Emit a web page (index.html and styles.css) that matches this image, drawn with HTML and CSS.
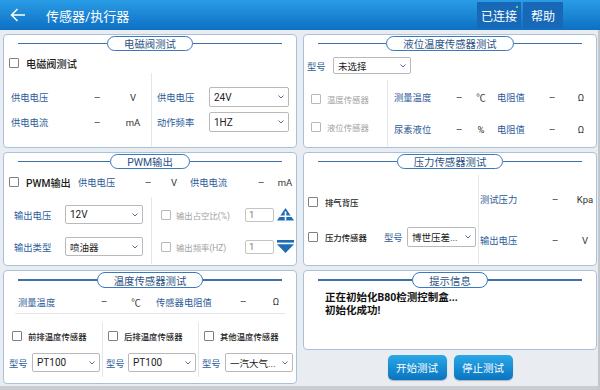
FILE: index.html
```html
<!DOCTYPE html>
<html>
<head>
<meta charset="utf-8">
<link rel="stylesheet" href="styles.css">
</head>
<body>
<div class="app">
  <header class="topbar">
    <svg class="back" viewBox="0 0 16 14" width="16" height="14"><path d="M15 7 H1.5 M7.5 1 L1.5 7 L7.5 13" fill="none" stroke="#fff" stroke-width="1.5"/></svg>
    <div class="title">传感器/执行器</div>
    <div class="actions">
      <div class="hbtn conn">已连接<span class="dot"></span></div>
      <div class="hbtn">帮助</div>
    </div>
  </header>
  <main class="grid">
    <!-- Panel 1 -->
    <section class="panel">
      <div class="ptitle"><i class="line"></i><span class="pill">电磁阀测试</span><i class="line"></i></div>
      <div class="chkrow p1chk"><span class="cb"></span><span class="chklbl">电磁阀测试</span></div>
      <div class="split p1split">
        <div class="col">
          <div class="vrow"><span class="lb">供电电压</span><span class="val">--</span><span class="unit">V</span></div>
          <div class="vrow"><span class="lb">供电电流</span><span class="val">--</span><span class="unit">mA</span></div>
        </div>
        <div class="col sep p1right">
          <div class="frow"><span class="lb w52">供电电压</span><div class="sel s1">24V<svg class="chev" viewBox="0 0 6 4" width="6" height="4"><path d="M0.5 0.5 L3 3 L5.5 0.5" fill="none" stroke="#4d6f9a" stroke-width="1"/></svg></div></div>
          <div class="frow"><span class="lb w52">动作频率</span><div class="sel s1">1HZ<svg class="chev" viewBox="0 0 6 4" width="6" height="4"><path d="M0.5 0.5 L3 3 L5.5 0.5" fill="none" stroke="#4d6f9a" stroke-width="1"/></svg></div></div>
        </div>
      </div>
    </section>

    <!-- Panel 2 -->
    <section class="panel">
      <div class="ptitle"><i class="line"></i><span class="pill">液位温度传感器测试</span><i class="line"></i></div>
      <div class="typerow"><span class="lb w26">型号</span><div class="sel s2 cjk">未选择<svg class="chev" viewBox="0 0 6 4" width="6" height="4"><path d="M0.5 0.5 L3 3 L5.5 0.5" fill="none" stroke="#4d6f9a" stroke-width="1"/></svg></div></div>
      <div class="split p2split">
        <div class="col p2left">
          <div class="crow"><span class="cb dis"></span><span class="dlbl">温度传感器</span></div>
          <div class="crow"><span class="cb dis"></span><span class="dlbl">液位传感器</span></div>
        </div>
        <div class="col sep p2right">
          <div class="mrow"><span class="lb">测量温度</span><span class="val">--</span><span class="unit">℃</span><span class="lb l2">电阻值</span><span class="val">--</span><span class="unit">Ω</span></div>
          <div class="mrow"><span class="lb">尿素液位</span><span class="val">--</span><span class="unit">%</span><span class="lb l2">电阻值</span><span class="val">--</span><span class="unit">Ω</span></div>
        </div>
      </div>
    </section>

    <!-- Panel 3 -->
    <section class="panel">
      <div class="ptitle"><i class="line"></i><span class="pill">PWM输出</span><i class="line"></i></div>
      <div class="chkrow p3chk"><span class="cb"></span><span class="chklbl w52">PWM输出</span><span class="lb w58">供电电压</span><span class="val w24">--</span><span class="unit w28">V</span><span class="lb w58 ml2">供电电流</span><span class="val w26">--</span><span class="unit w22">mA</span></div>
      <div class="split p3split">
        <div class="col p3left">
          <div class="frow3"><span class="lb w51">输出电压</span><div class="sel s3">12V<svg class="chev" viewBox="0 0 6 4" width="6" height="4"><path d="M0.5 0.5 L3 3 L5.5 0.5" fill="none" stroke="#4d6f9a" stroke-width="1"/></svg></div></div>
          <div class="frow3"><span class="lb w51">输出类型</span><div class="sel s3 cjk">喷油器<svg class="chev" viewBox="0 0 6 4" width="6" height="4"><path d="M0.5 0.5 L3 3 L5.5 0.5" fill="none" stroke="#4d6f9a" stroke-width="1"/></svg></div></div>
        </div>
        <div class="col sep p3right">
          <div class="frow3"><span class="cb dis"></span><span class="dlbl w69">输出占空比(%)</span><span class="num">1</span><svg class="tri" viewBox="0 0 17 13" width="17" height="13"><path d="M8.5 0 L17 12.5 L0 12.5 Z" fill="#1f6db5"/><path d="M8.5 3.5 V12.5 M2 8.3 H15" stroke="#fff" stroke-width="1.6"/></svg></div>
          <div class="frow3"><span class="cb dis"></span><span class="dlbl w69">输出频率(HZ)</span><span class="num">1</span><svg class="tri" viewBox="0 0 17 13" width="17" height="13"><rect x="0" y="0" width="17" height="2.6" fill="#1f6db5"/><path d="M0 4.2 L17 4.2 L8.5 13 Z" fill="#1f6db5"/></svg></div>
        </div>
      </div>
    </section>

    <!-- Panel 4 -->
    <section class="panel">
      <div class="ptitle"><i class="line"></i><span class="pill">压力传感器测试</span><i class="line"></i></div>
      <div class="split p4split">
        <div class="col p4left">
          <div class="crow4"><span class="cb"></span><span class="blbl">排气背压</span></div>
          <div class="crow4"><span class="cb"></span><span class="blbl w59">压力传感器</span><span class="lb w23">型号</span><div class="sel s4 cjk">博世压差...<svg class="chev" viewBox="0 0 6 4" width="6" height="4"><path d="M0.5 0.5 L3 3 L5.5 0.5" fill="none" stroke="#4d6f9a" stroke-width="1"/></svg></div></div>
        </div>
        <div class="col sep p4right">
          <div class="mrow4"><span class="lb">测试压力</span><span class="val">--</span><span></span><span class="unit">Kpa</span></div>
          <div class="mrow4"><span class="lb">输出电压</span><span class="val">--</span><span></span><span class="unit">V</span></div>
        </div>
      </div>
    </section>

    <!-- Panel 5 -->
    <section class="panel">
      <div class="ptitle t16"><i class="line"></i><span class="pill">温度传感器测试</span><i class="line"></i></div>
      <div class="mrow5"><span class="lb">测量温度</span><span class="val">--</span><span class="unit">℃</span><span class="lb">传感器电阻值</span><span class="val">--</span><span class="unit ur">Ω</span></div>
      <div class="tri3">
        <div class="tcol c1">
          <div class="crow5"><span class="cb"></span><span class="blbl">前排温度传感器</span></div>
          <div class="frow5"><span class="lb w23">型号</span><div class="sel s5">PT100<svg class="chev" viewBox="0 0 6 4" width="6" height="4"><path d="M0.5 0.5 L3 3 L5.5 0.5" fill="none" stroke="#4d6f9a" stroke-width="1"/></svg></div></div>
        </div>
        <div class="tcol">
          <div class="crow5"><span class="cb"></span><span class="blbl">后排温度传感器</span></div>
          <div class="frow5"><span class="lb w22">型号</span><div class="sel s5">PT100<svg class="chev" viewBox="0 0 6 4" width="6" height="4"><path d="M0.5 0.5 L3 3 L5.5 0.5" fill="none" stroke="#4d6f9a" stroke-width="1"/></svg></div></div>
        </div>
        <div class="tcol">
          <div class="crow5"><span class="cb"></span><span class="blbl">其他温度传感器</span></div>
          <div class="frow5"><span class="lb w23">型号</span><div class="sel s5 cjk">一汽大气...<svg class="chev" viewBox="0 0 6 4" width="6" height="4"><path d="M0.5 0.5 L3 3 L5.5 0.5" fill="none" stroke="#4d6f9a" stroke-width="1"/></svg></div></div>
        </div>
      </div>
    </section>

    <!-- Panel 6 + buttons -->
    <div class="rcol">
      <section class="panel p6">
        <div class="ptitle t16"><i class="line"></i><span class="pill">提示信息</span><i class="line"></i></div>
        <div class="msg">
          <p>正在初始化B80检测控制盒...</p>
          <p>初始化成功!</p>
        </div>
      </section>
      <div class="btns">
        <div class="btn">开始测试</div>
        <div class="btn">停止测试</div>
      </div>
    </div>
  </main>
</div>
</body>
</html>
```

FILE: styles.css
```css
* { box-sizing: border-box; margin: 0; padding: 0; }
html, body { width: 600px; height: 390px; overflow: hidden; }
body {
  font-family: Roboto, "Noto Sans CJK SC", sans-serif;
  background: #e9edf2;
  color: #222;
  font-size: 10px;
}
.app { width: 600px; height: 390px; display: flex; flex-direction: column; }

/* header */
.topbar {
  height: 30px;
  flex: none;
  display: flex;
  align-items: center;
  background: linear-gradient(#2a9ce6, #0d6fc3);
  color: #fff;
}
.back { margin-left: 10px; flex: none; }
.title { margin-left: 20px; font-size: 13px; letter-spacing: 0; }
.actions { margin-left: auto; margin-right: 37px; display: flex; gap: 2px; align-self: stretch; padding: 2px 0; }
.hbtn {
  position: relative;
  display: flex; align-items: center;
  padding: 0 8px;
  font-size: 12px;
  background: #1769b8;
}
.hbtn.conn { padding: 0 4px; }
.dot { position: absolute; right: 3px; top: 4px; width: 2px; height: 2px; background: #5fe06a; }

/* grid */
.grid {
  flex: 1;
  display: grid;
  grid-template-columns: 294px 294px;
  grid-template-rows: 114px 114px 114px;
  column-gap: 6px;
  row-gap: 4px;
  padding: 4px 0 0 3px;
  border-right: 2px solid #c3c7cc;
  border-bottom: 4px solid #c9cdd2;
}
.panel {
  background: #fff;
  border: 1px solid #a9c2dc;
  border-radius: 4px;
  display: flex;
  flex-direction: column;
  min-height: 0;
}
.ptitle { display: flex; align-items: center; height: 15px; margin: 1px 14px 0; flex: none; }
.ptitle.t16 { height: 16px; }
.ptitle .line { flex: 1; height: 1.5px; background: #3f70a8; }
.pill {
  height: 100%;
  padding: 0 16px;
  border: 1.5px solid #3a79be;
  border-radius: 8px;
  font-size: 10.4px;
  color: #2c5283;
  display: flex; align-items: center;
  background: #fff;
  white-space: nowrap;
}

.cb { width: 10px; height: 10px; border: 1px solid #808080; border-radius: 1px; background: #fff; flex: none; }
.cb.dis { border-color: #b8b8b8; }
.lb { color: #2d5c98; font-size: 9.3px; white-space: nowrap; }
.val { color: #444; font-size: 10px; text-align: center; letter-spacing: -0.3px; }
.unit { color: #333; font-size: 9.5px; text-align: center; }
.chklbl { font-size: 10.2px; font-weight: 500; color: #1e1e1e; white-space: nowrap; }
.dlbl { font-size: 8.4px; color: #a2a2a2; white-space: nowrap; }
.blbl { font-size: 8.4px; font-weight: 500; color: #1e1e1e; white-space: nowrap; }

.sel {
  display: flex; align-items: center; justify-content: space-between;
  border: 1px solid #b9b9b9; border-radius: 2px; background: #fff;
  padding: 0 4px 0 4px;
  font-size: 10px; color: #222;
  flex: none;
  white-space: nowrap;
}
.sel.cjk { font-size: 9.5px; }
.chev { flex: none; }

.w22 { width: 22px; flex: none; } .w23 { width: 23px; flex: none; } .w24 { width: 24px; flex: none; }
.w26 { width: 26px; flex: none; } .w28 { width: 28px; flex: none; } .w51 { width: 51px; flex: none; }
.w52 { width: 52px; flex: none; } .w58 { width: 58px; flex: none; } .w59 { width: 59px; flex: none; }
.w69 { width: 69px; flex: none; }
.ml2 { margin-left: 2px; }

.chkrow { display: flex; align-items: center; height: 14px; flex: none; padding-left: 5px; }
.chkrow .cb { margin-right: 7px; }

.split { flex: 1; display: grid; min-height: 0; }
.col { display: flex; flex-direction: column; justify-content: center; }
.sep { border-left: 1px solid #e3e7ec; }

/* panel 1 */
.p1chk { margin-top: 5px; }
.p1split { margin: 3px 0 1px; grid-template-columns: 147px 1fr; }
.vrow { display: grid; grid-template-columns: 64px 44px 28px; height: 25px; align-items: center; padding-left: 7px; }
.p1right { padding-left: 5px; }
.frow { display: flex; align-items: center; height: 25px; }
.s1 { width: 80px; height: 20px; }

/* panel 2 */
.typerow { display: flex; align-items: center; height: 17px; margin-top: 6px; padding-left: 3px; flex: none; }
.s2 { width: 78px; height: 17px; }
.p2split { margin: 6px 0 1px; grid-template-columns: 83px 1fr; }
.p2left { padding-left: 7px; }
.crow { display: flex; align-items: center; gap: 6px; height: 28px; }
.p2right { padding-left: 6px; }
.mrow { display: grid; grid-template-columns: 52px 26px 18px 47px 30px 28px; height: 32px; align-items: center; }
.mrow .l2 { padding-left: 7px; }

/* panel 3 */
.p3chk { margin-top: 6px; }
.p3split { margin: 5px 0 1px; padding-top: 3px; grid-template-columns: 147px 1fr; }
.p3left { padding-left: 10px; }
.frow3 { display: flex; align-items: center; height: 32px; }
.s3 { width: 78px; height: 19px; }
.p3right { padding-left: 9px; }
.p3right .cb { margin-right: 5px; }
.num {
  width: 29px; height: 14px; flex: none;
  border: 1px solid #c4c4c4; border-radius: 2px;
  font-size: 9.5px; color: #777; padding-left: 3px;
  display: flex; align-items: center;
}
.tri { margin-left: 3px; flex: none; }

/* panel 4 */
.p4split { margin: 6px 0 1px; grid-template-columns: 174px 1fr; }
.p4left { padding-left: 4px; }
.crow4 { display: flex; align-items: center; height: 35px; }
.crow4 .cb { margin-right: 7px; }
.s4 { width: 69px; height: 20px; }
.p4right { padding-left: 1px; }
.mrow4 { display: grid; grid-template-columns: 65px 20px 10px 20px; height: 41px; align-items: center; }

/* panel 5 */
.mrow5 {
  display: grid;
  grid-template-columns: 77px 24px 40px 72px 30px 1fr;
  align-items: center;
  height: 24px; margin: 2px 11px 0;
  border-bottom: 1px solid #e3e7ec;
  flex: none;
}
.mrow5 > .lb:first-child { padding-left: 3px; }
.mrow5 .ur { text-align: right; padding-right: 6px; }
.tri3 { display: grid; grid-template-columns: 98px 96px 1fr; margin: 8px 0 6px; flex: 1; }
.tcol { display: flex; flex-direction: column; }
.tcol + .tcol { border-left: 1px solid #e3e7ec; }
.crow5 { display: flex; align-items: center; gap: 6px; height: 28px; padding-left: 5px; }
.frow5 { display: flex; align-items: center; height: 25px; padding-left: 3px; }
.c1 .crow5 { padding-left: 8px; }
.c1 .frow5 { padding-left: 5px; }
.s5 { width: 68px; height: 19px; }

/* panel 6 */
.rcol { display: flex; flex-direction: column; }
.p6 { height: 80px; flex: none; }
.msg { padding: 3px 0 0 21px; font-size: 10.5px; font-weight: 700; color: #111; line-height: 13px; }
.btns { display: flex; justify-content: center; gap: 7px; margin-top: 5px; }
.btn {
  width: 59px; height: 25px;
  border-radius: 5px;
  background: linear-gradient(#2aa8e8, #0a74c0);
  color: #fff; font-size: 10.5px;
  display: flex; align-items: center; justify-content: center;
  box-shadow: 0 1px 1px rgba(0,0,0,0.25);
}
```
